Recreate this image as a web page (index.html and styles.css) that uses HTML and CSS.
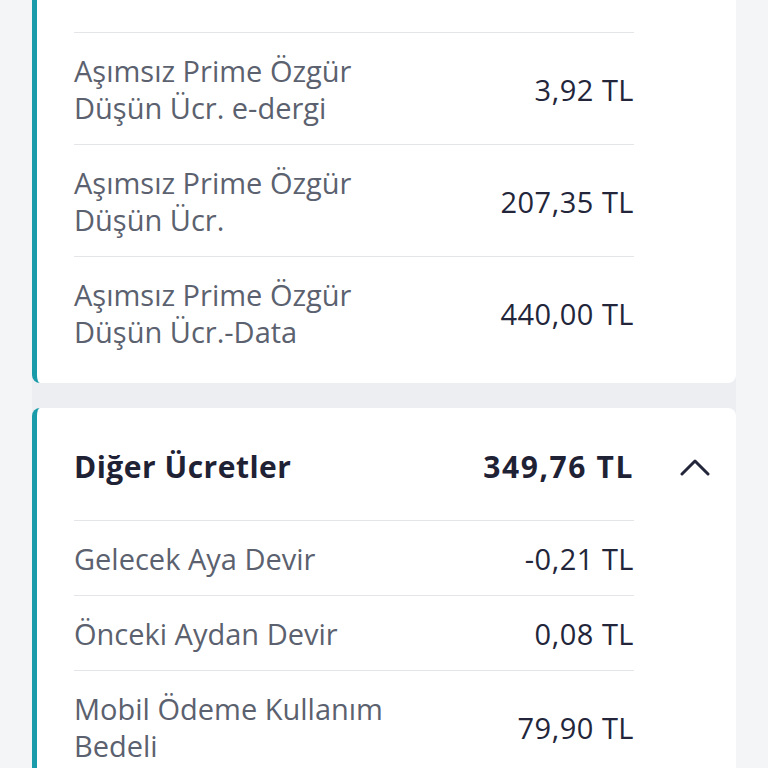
FILE: index.html
```html
<!DOCTYPE html>
<html lang="tr">

<head>
    <meta charset="UTF-8">
    <meta name="viewport" content="width=device-width, initial-scale=1.0">
    <title>Fatura Detayı</title>
    <link rel="stylesheet" href="styles.css">
</head>

<body>
    <div class="list">
        <!-- üst kart, başı ekranın dışında kalıyor -->
        <div class="card card-cut">
            <div class="row">
                <span class="label">Aşımsız Prime Özgür Düşün Ücr. e-dergi</span>
                <span class="value">3,92 TL</span>
            </div>
            <div class="row">
                <span class="label">Aşımsız Prime Özgür Düşün Ücr.</span>
                <span class="value">207,35 TL</span>
            </div>
            <div class="row">
                <span class="label">Aşımsız Prime Özgür Düşün Ücr.-Data</span>
                <span class="value">440,00 TL</span>
            </div>
        </div>

        <div class="card">
            <div class="card-header">
                <span class="title">Diğer Ücretler</span>
                <span class="total">349,76 TL</span>
                <svg class="chevron" width="30" height="18" viewBox="0 0 30 18">
                    <path d="M2 16 L15 3 L28 16" fill="none" stroke="#23263a" stroke-width="3" stroke-linecap="round" stroke-linejoin="round"/>
                </svg>
            </div>
            <div class="row">
                <span class="label">Gelecek Aya Devir</span>
                <span class="value">-0,21 TL</span>
            </div>
            <div class="row">
                <span class="label">Önceki Aydan Devir</span>
                <span class="value">0,08 TL</span>
            </div>
            <div class="row">
                <span class="label">Mobil Ödeme Kullanım Bedeli</span>
                <span class="value">79,90 TL</span>
            </div>
        </div>
    </div>
</body>

</html>
```

FILE: styles.css
```css
* {
    margin: 0;
    padding: 0;
    box-sizing: border-box;
}

body {
    background: #f4f5f7;
    font-family: "Open Sans", "Noto Sans", sans-serif;
    height: 768px;
    overflow: hidden;
}

.list {
    margin: 0 32px;
    background: #eceef2;
    display: flex;
    flex-direction: column;
    gap: 25px;
}

.card {
    background: #fff;
    border-left: 5px solid #1a9ba9;
    border-radius: 8px;
    padding: 0 26px 15px 37px;
}

/* 第一张卡片顶部被截掉 */
.card-cut {
    border-radius: 0 0 8px 8px;
    padding-top: 32px;
}

.row {
    display: flex;
    justify-content: space-between;
    align-items: center;
    margin-right: 76px;
    border-top: 1px solid #e3e5e9;
    padding: 19px 0 18px;
    line-height: 37px;
}

.label {
    max-width: 340px;
    font-size: 29px;
    color: #5b616e;
}

.value {
    font-size: 29px;
    font-weight: 500;
    letter-spacing: 0.5px;
    color: #23263a;
}

.card-header {
    display: flex;
    align-items: center;
    padding: 40px 0 35px;
    line-height: 37px;
    color: #1f2235;
}

.title {
    flex: 1;
    font-size: 30px;
    font-weight: 700;
    letter-spacing: 0.5px;
}

.total {
    font-size: 30px;
    font-weight: 700;
    letter-spacing: 1.6px;
}

.chevron {
    margin-left: 46px;
}
```
